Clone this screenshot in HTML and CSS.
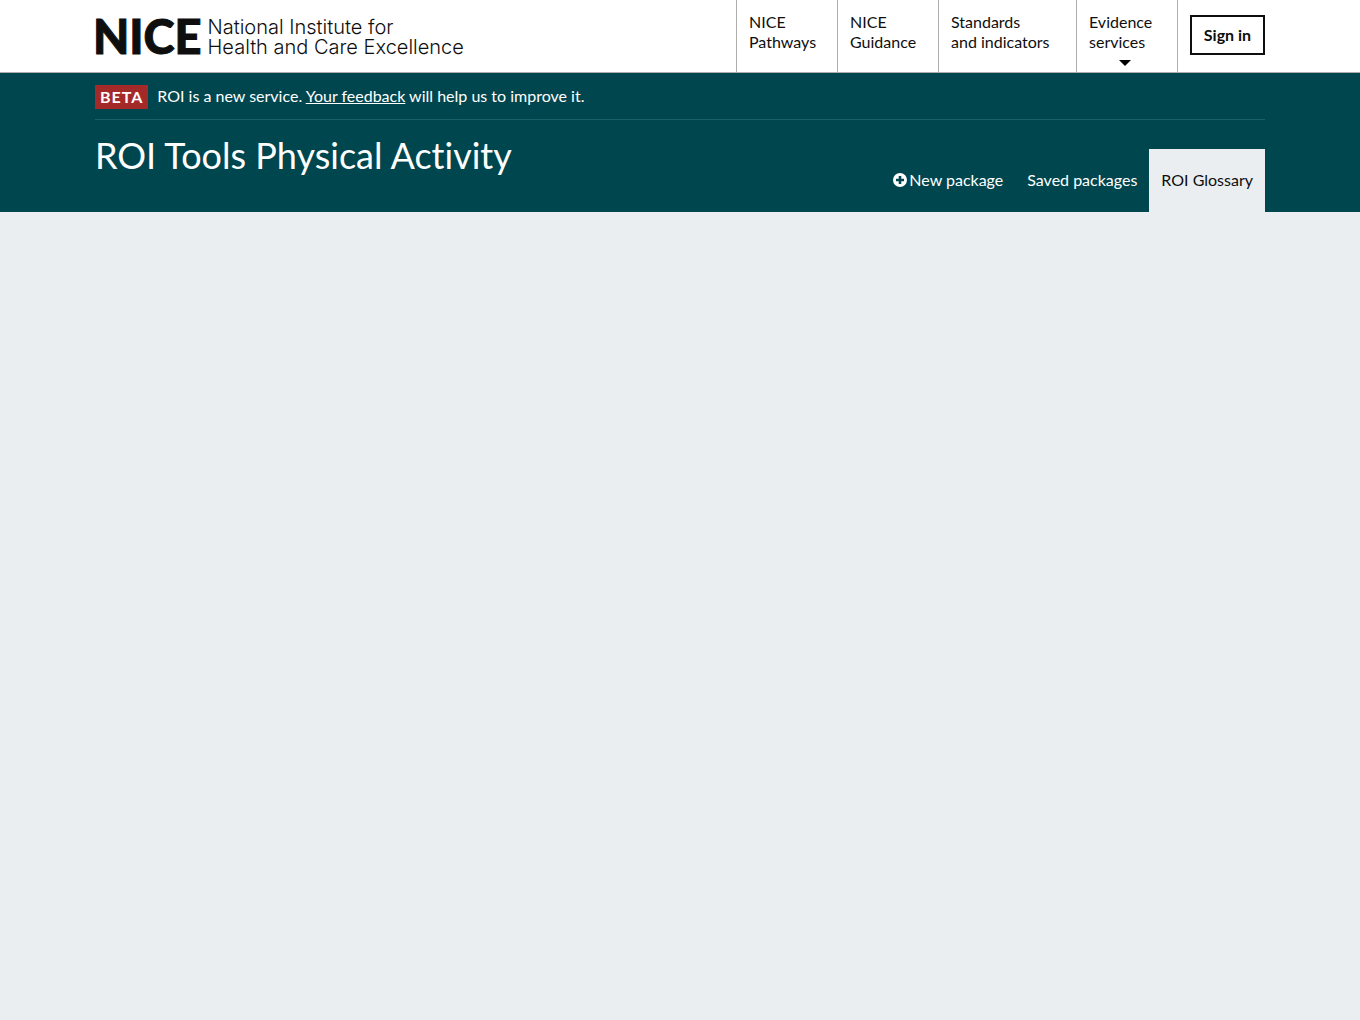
FILE: index.html
```html
<!DOCTYPE html>
<html lang="en">
<head>
  <meta charset="utf-8">
  <meta name="viewport" content="width=device-width, initial-scale=1">
  <title>ROI Glossary | ROI Tools Physical Activity | NICE</title>
  <link rel="stylesheet" href="styles.css">
</head>
<body>
  <header class="site-header">
    <div class="container site-header-inner">
      <a class="logo" href="#">
        <span class="logo-mark">NICE</span>
        <span class="logo-name">National Institute for<br>Health and Care Excellence</span>
      </a>
      <nav class="services" aria-label="Services">
        <a class="service" href="#">NICE<br>Pathways</a>
        <a class="service" href="#">NICE<br>Guidance</a>
        <a class="service service-wide" href="#">Standards<br>and indicators</a>
        <a class="service" href="#">Evidence<br>services
          <svg class="caret" width="12" height="6" viewBox="0 0 12 6" aria-hidden="true"><path d="M0 0h12L6 6z"/></svg>
        </a>
        <div class="account"><button class="sign-in" type="button">Sign in</button></div>
      </nav>
    </div>
  </header>
  <div class="masthead">
    <div class="container">
      <div class="phase">
        <strong class="phase-tag">BETA</strong>
        <p class="phase-text">ROI is a new service. <a href="#">Your feedback</a> will help us to improve it.</p>
      </div>
      <div class="masthead-main">
        <h1 class="title">ROI Tools Physical Activity</h1>
        <nav class="tabs" aria-label="Tool">
          <a class="tab" href="#"><svg class="plus" width="14" height="14" viewBox="0 0 14 14" aria-hidden="true"><path fill-rule="evenodd" d="M7 0a7 7 0 1 1 0 14A7 7 0 0 1 7 0zM5.700 3v2.700H3v2.600h2.700V11h2.600V8.300H11V5.700H8.300V3z"/></svg>New package</a>
          <a class="tab" href="#">Saved packages</a>
          <a class="tab tab-current" href="#" aria-current="page">ROI Glossary</a>
        </nav>
      </div>
    </div>
  </div>
  <main></main>
</body>
</html>
```
FILE: styles.css
```css
* {
  box-sizing: border-box;
}

body {
  margin: 0;
  background: #eaeef1;
  color: #0e0e0e;
  font: 16px/20px Lato, sans-serif;
  font-variant-ligatures: none;
}

a {
  color: inherit;
}

.container {
  max-width: 1170px;
  margin: 0 auto;
}

.site-header {
  background: #fff;
  border-bottom: 1px solid #adadad;
}

.site-header-inner {
  display: flex;
  justify-content: space-between;
  min-height: 72px;
}

.logo {
  display: flex;
  align-items: center;
  gap: 6px;
  margin-left: -2px;
  text-decoration: none;
  white-space: nowrap;
}

.logo-mark {
  font-size: 47px;
  line-height: 48px;
  font-weight: 900;
  -webkit-text-stroke: 1px currentColor;
}

.logo-name {
  padding-top: 2px;
  font: 300 20px/20px Inter, sans-serif;
}

.services {
  display: flex;
}

.service {
  position: relative;
  width: 101px;
  padding: 12px 0 20px 12px;
  border-left: 1px solid #adadad;
  text-decoration: none;
  white-space: nowrap;
}

.service-wide {
  width: 138px;
}

.caret {
  position: absolute;
  left: 42px;
  bottom: 6px;
}

.account {
  display: flex;
  align-items: flex-start;
  padding: 15px 0 0 12px;
  border-left: 1px solid #adadad;
}

.sign-in {
  width: 75px;
  height: 40px;
  padding: 0;
  border: 2px solid #0e0e0e;
  background: #fff;
  color: inherit;
  font: bold 16px/20px Lato, sans-serif;
}

.masthead {
  background: #00464f;
  color: #fff;
}

.phase {
  display: flex;
  align-items: flex-start;
  gap: 9px;
  padding: 12px 0 10px;
  border-bottom: 1px solid #1c5f68;
}

.phase-tag {
  padding: 0 5px;
  background: #a42a2a;
  line-height: 24px;
  letter-spacing: 1px;
}

.phase-text {
  margin: 0;
  line-height: 22px;
}

.masthead-main {
  display: flex;
  justify-content: space-between;
  align-items: flex-end;
  height: 92px;
}

.title {
  align-self: flex-start;
  margin: 13px 0 0;
  font-size: 36px;
  line-height: 44px;
  font-weight: 400;
}

.tabs {
  display: flex;
}

.tab {
  display: flex;
  align-items: center;
  gap: 2px;
  height: 63px;
  padding: 0 12px 2px;
  text-decoration: none;
  white-space: nowrap;
}

.tab-current {
  background: #eaeef1;
  color: #0e0e0e;
}

.plus {
  fill: currentColor;
}
```
